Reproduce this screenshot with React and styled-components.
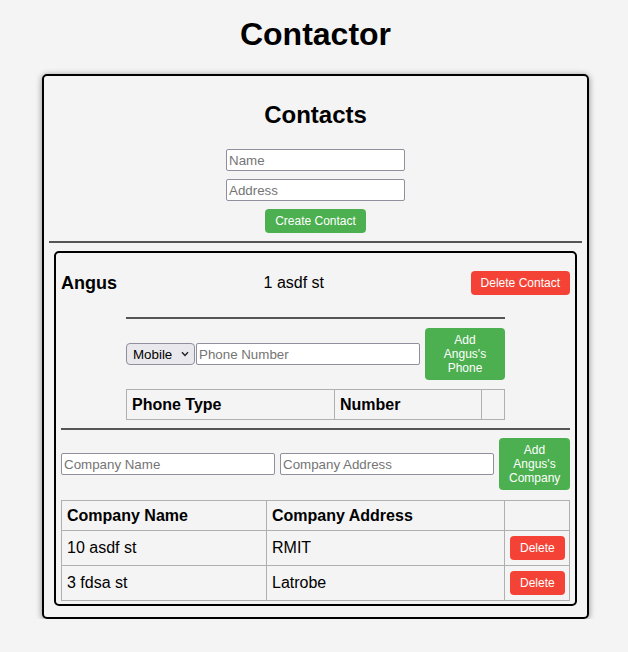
import React from "react";
import styled, { createGlobalStyle } from "styled-components";

const Global = createGlobalStyle`
  html, body { margin: 0; padding: 0; background: #f4f4f4; }
  body { font-family: "Liberation Sans", Arial, sans-serif; color: #000; }
  * { box-sizing: border-box; }
`;

const Page = styled.div`
  padding: 16px 0 0 3px;
`;

const Title = styled.h1`
  margin: 0 0 21px;
  font-size: 32px;
  line-height: 37px;
  font-weight: 700;
  text-align: center;
`;

const Card = styled.div`
  width: 547px;
  margin: 0 auto;
  border: 2px solid #000;
  border-radius: 5px;
  box-shadow: 0 1px 6px rgba(0, 0, 0, 0.45);
  padding: 0 5px 11px;
`;

const Heading = styled.h2`
  margin: 25px 0 20px;
  font-size: 24px;
  line-height: 28px;
  font-weight: 700;
  text-align: center;
`;

const CreateForm = styled.div`
  display: flex;
  flex-direction: column;
  align-items: center;
  gap: 8px;
`;

const Input = styled.input`
  height: 22px;
  width: ${(p) => p.$w || "auto"};
  flex: ${(p) => p.$flex || "none"};
  min-width: 0;
  border: 1px solid #8f8f9d;
  border-radius: 2px;
  background: #fff;
  padding: 1px 2px;
  font-family: "Liberation Sans", Arial, sans-serif;
  font-size: 13.33px;
  color: #000;
  &::placeholder { color: #757575; }
`;

const Button = styled.button`
  border: none;
  border-radius: 4px;
  background: ${(p) => (p.$danger ? "#f44336" : "#4caf50")};
  color: #fff;
  font-family: "Liberation Sans", Arial, sans-serif;
  font-size: 12px;
  line-height: 14px;
  padding: 5px 10px;
  text-align: center;
  width: ${(p) => p.$w || "auto"};
  margin-left: ${(p) => p.$ml || "0"};
  flex: none;
  cursor: pointer;
`;

const Rule = styled.hr`
  height: 2px;
  border: none;
  background: #555;
  margin: ${(p) => p.$m || "8px 0"};
`;

const ContactCard = styled.div`
  margin: 0 5px;
  border: 2px solid #000;
  border-radius: 5px;
  padding: 18px 5px 3px;
`;

const ContactHeader = styled.div`
  display: flex;
  justify-content: space-between;
  align-items: center;
  height: 24px;
`;

const Name = styled.h3`
  margin: 0;
  font-size: 18px;
  font-weight: 700;
  line-height: 21px;
`;

const Address = styled.span`
  font-size: 16px;
  line-height: 18px;
`;

const PhoneSection = styled.div`
  width: 379px;
  margin: 0 auto;
`;

const FormRow = styled.div`
  display: flex;
  align-items: center;
  gap: ${(p) => p.$gap || "5px"};
`;

const SelectWrap = styled.div`
  position: relative;
  flex: none;
  width: 69px;
  height: 22px;
  margin-right: 1px;
`;

const Select = styled.select`
  appearance: none;
  width: 100%;
  height: 100%;
  border: 1px solid #8f8f9d;
  border-radius: 4px;
  background: #e9e9ed;
  padding: 0 0 0 6px;
  font-family: "Liberation Sans", Arial, sans-serif;
  font-size: 13.33px;
  color: #000;
`;

const Chevron = styled.svg`
  position: absolute;
  right: 6px;
  top: 8px;
  pointer-events: none;
`;

const Table = styled.table`
  width: 100%;
  border-collapse: collapse;
  table-layout: fixed;
  margin-top: ${(p) => p.$mt || "9px"};
`;

const Th = styled.th`
  border: 1px solid #b0b0b0;
  padding: 5px;
  text-align: left;
  font-size: 16px;
  line-height: 19px;
  font-weight: 700;
  width: ${(p) => p.$w || "auto"};
`;

const Td = styled.td`
  border: 1px solid #b0b0b0;
  padding: 5px;
  font-size: 16px;
  line-height: 18px;
  vertical-align: middle;
`;

const companies = [
  { name: "10 asdf st", address: "RMIT" },
  { name: "3 fdsa st", address: "Latrobe" },
];

export default function App() {
  return (
    <>
      <Global />
      <Page>
        <Title>Contactor</Title>
        <Card>
          <Heading>Contacts</Heading>
          <CreateForm>
            <Input $w="179px" placeholder="Name" />
            <Input $w="179px" placeholder="Address" />
            <Button>Create Contact</Button>
          </CreateForm>
          <Rule />
          <ContactCard>
            <ContactHeader>
              <Name>Angus</Name>
              <Address>1 asdf st</Address>
              <Button $danger>Delete Contact</Button>
            </ContactHeader>
            <PhoneSection>
              <Rule $m="22px 0 9px" />
              <FormRow $gap="0">
                <SelectWrap>
                  <Select defaultValue="Mobile">
                    <option>Mobile</option>
                    <option>Home</option>
                    <option>Work</option>
                  </Select>
                  <Chevron width="8" height="6" viewBox="0 0 8 6">
                    <path d="M1 1.2 L4 4.4 L7 1.2" fill="none" stroke="#222" strokeWidth="1.4" />
                  </Chevron>
                </SelectWrap>
                <Input $flex="1" placeholder="Phone Number" />
                <Button $w="80px" $ml="5px">Add Angus's Phone</Button>
              </FormRow>
              <Table>
                <thead>
                  <tr>
                    <Th $w="208px">Phone Type</Th>
                    <Th $w="147px">Number</Th>
                    <Th />
                  </tr>
                </thead>
              </Table>
            </PhoneSection>
            <Rule $m="8px 0" />
            <FormRow>
              <Input $flex="1" placeholder="Company Name" />
              <Input $flex="1" placeholder="Company Address" />
              <Button $w="71px">Add Angus's Company</Button>
            </FormRow>
            <Table $mt="10px">
              <thead>
                <tr>
                  <Th $w="205px">Company Name</Th>
                  <Th $w="238px">Company Address</Th>
                  <Th />
                </tr>
              </thead>
              <tbody>
                {companies.map((c) => (
                  <tr key={c.name}>
                    <Td>{c.name}</Td>
                    <Td>{c.address}</Td>
                    <Td>
                      <Button $danger>Delete</Button>
                    </Td>
                  </tr>
                ))}
              </tbody>
            </Table>
          </ContactCard>
        </Card>
      </Page>
    </>
  );
}
